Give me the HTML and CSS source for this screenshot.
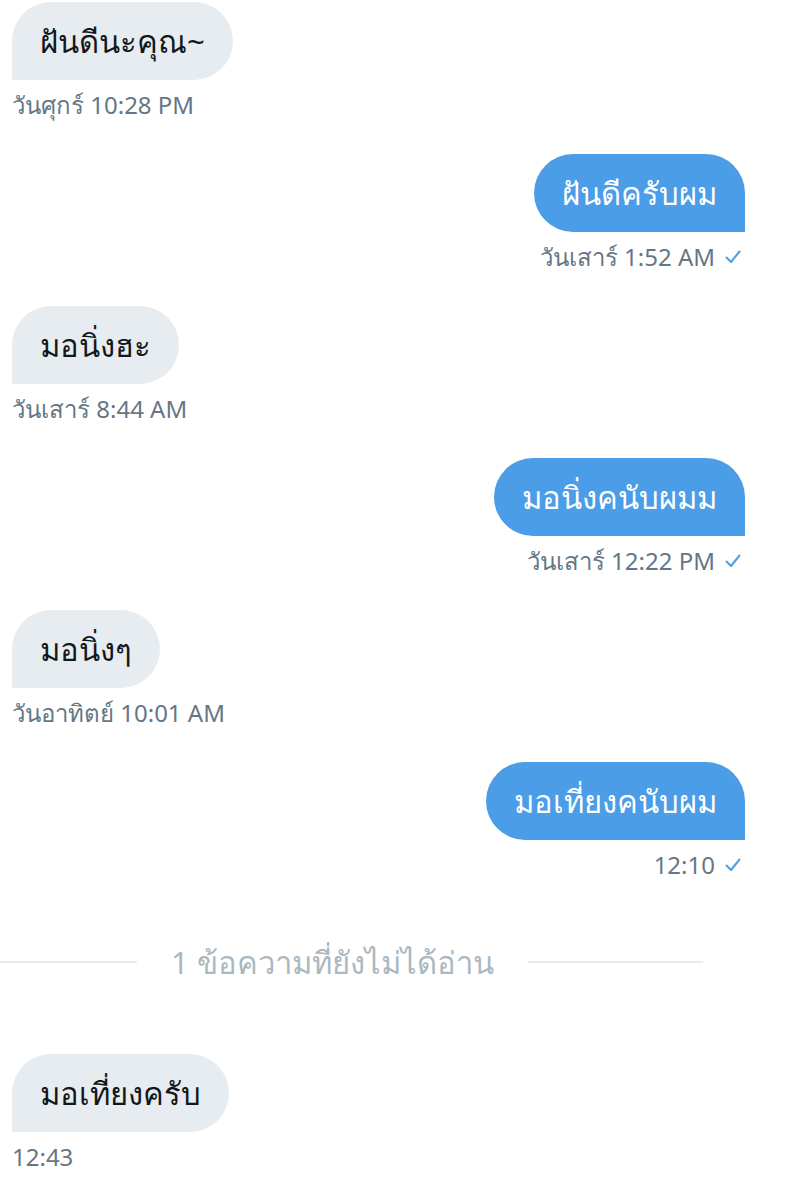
FILE: index.html
```html
<html>
  <head>
    <title>Messages</title>
    <link rel="stylesheet" href="styles.css">
  </head>
  <body>
    <div class='thread'>

      <div class='msg in'>
        <div class='bubble'>ฝันดีนะคุณ~</div>
        <div class='meta'>วันศุกร์ 10:28 PM</div>
      </div>

      <div class='msg out'>
        <div class='bubble'>ฝันดีครับผม</div>
        <div class='meta'>วันเสาร์ 1:52 AM <svg class='tick' viewBox='0 0 16 14'><path d='M1.5 7.5 L6 12 L14.5 1.5' /></svg></div>
      </div>

      <div class='msg in'>
        <div class='bubble'>มอนิ่งฮะ</div>
        <div class='meta'>วันเสาร์ 8:44 AM</div>
      </div>

      <div class='msg out'>
        <div class='bubble'>มอนิ่งคนับผมม</div>
        <div class='meta'>วันเสาร์ 12:22 PM <svg class='tick' viewBox='0 0 16 14'><path d='M1.5 7.5 L6 12 L14.5 1.5' /></svg></div>
      </div>

      <div class='msg in'>
        <div class='bubble'>มอนิ่งๆ</div>
        <div class='meta'>วันอาทิตย์ 10:01 AM</div>
      </div>

      <div class='msg out'>
        <div class='bubble'>มอเที่ยงคนับผม</div>
        <div class='meta'>12:10 <svg class='tick' viewBox='0 0 16 14'><path d='M1.5 7.5 L6 12 L14.5 1.5' /></svg></div>
      </div>

      <div class='unread'>
        <span class='rule'></span>
        <span class='unread-text'>1 ข้อความที่ยังไม่ได้อ่าน</span>
        <span class='rule'></span>
      </div>

      <div class='msg in'>
        <div class='bubble'>มอเที่ยงครับ</div>
        <div class='meta'>12:43</div>
      </div>

    </div>
  </body>
</html>
```

FILE: styles.css
```css
html {
  background-color: #fff;
}

body {
  margin: 0;
  font-family: 'Noto Sans', 'DejaVu Sans', sans-serif;
  color: #14171a;
}

.thread {
  display: flex;
  flex-direction: column;
  padding: 2px 43px 0 12px;
}

.msg {
  display: flex;
  flex-direction: column;
  margin-bottom: 36px;
}

.msg.in {
  align-items: flex-start;
}

.msg.out {
  align-items: flex-end;
}

.bubble {
  font-size: 31px;
  line-height: 38px;
  height: 38px;
  padding: 20px 28px;
  border-radius: 39px;
  white-space: nowrap;
}

.in .bubble {
  background-color: #e6ecf0;
  color: #14171a;
  border-bottom-left-radius: 0;
}

.out .bubble {
  background-color: #4a9de6;
  color: #fff;
  border-bottom-right-radius: 0;
}

.meta {
  display: flex;
  align-items: center;
  margin-top: 12px;
  font-size: 24px;
  line-height: 26px;
  height: 26px;
  color: #657786;
}

.out .meta {
  margin-right: 4px;
}

.tick {
  width: 16px;
  height: 14px;
  margin-left: 10px;
  fill: none;
  stroke: #4a9de6;
  stroke-width: 2;
  stroke-linecap: round;
  stroke-linejoin: round;
}

.unread {
  display: grid;
  grid-template-columns: 137px auto 175px;
  column-gap: 34px;
  align-items: center;
  justify-content: start;
  margin: 28px 0 72px -12px;
  height: 40px;
}

.rule {
  height: 2px;
  background-color: #e6ecf0;
}

.unread-text {
  font-size: 31px;
  line-height: 40px;
  color: #aab8c2;
}
```
